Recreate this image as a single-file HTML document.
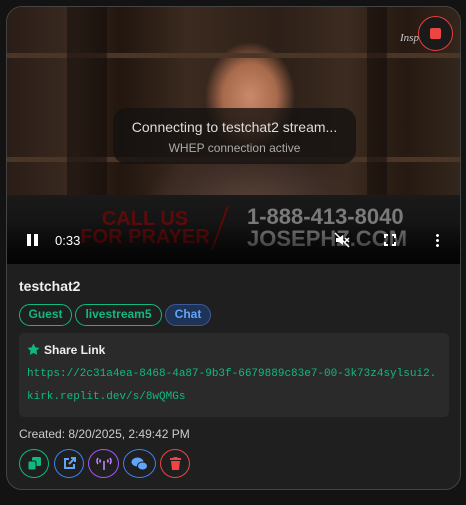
<!DOCTYPE html>
<html><head><style>
*{box-sizing:border-box;margin:0;padding:0}
body{width:466px;height:505px;background:#131313;font-family:"Liberation Sans",sans-serif;position:relative;overflow:hidden}
.card{position:absolute;left:6px;top:6px;width:455px;height:484px;background:#1f1f1f;border:1px solid #444;border-radius:16px;overflow:hidden}
.vid{position:absolute;left:0;top:0;width:453px;height:257px;overflow:hidden;
background:
radial-gradient(ellipse 45px 55px at 243px 90px,#c98a6a 0%,#a86a4c 60%,rgba(90,50,35,0) 100%),
radial-gradient(ellipse 110px 60px at 245px 200px,#5a4338 0%,#3e2e27 70%,rgba(40,30,25,0) 100%),
linear-gradient(90deg,#2a1d17 0%,#3a2a20 15%,#22160f 25%,#3b2a1f 40%,#2d2018 60%,#3c2b20 75%,#251911 88%,#33261c 100%)}
.shelf{position:absolute;left:0;width:453px;height:5px;background:#4a3526}
.banner{position:absolute;left:0;top:188px;width:453px;height:69px;background:linear-gradient(#1a1a1a,#0c0c0c)}
.ov{position:absolute;left:106px;top:101px;width:243px;height:56px;background:rgba(20,18,17,.78);border-radius:14px;text-align:center}
.ov .a{color:#ddd;font-size:14px;margin-top:11px}
.ov .b{color:#aaa;font-size:12px;margin-top:6px}
.ctl{position:absolute;color:#fff;font-size:13px}
.t{position:absolute;font-weight:bold}
.tag{position:absolute;top:297px;height:22px;border-radius:11px;font-size:12px;font-weight:bold;text-align:center;line-height:19px;border:1.5px solid #10b981;color:#10b981}
.share{position:absolute;left:12px;top:326px;width:430px;height:84px;background:#2a2a2a;border-radius:5px}
.mono{font-family:"Liberation Mono",monospace;font-size:11px;color:#10b981;position:absolute;left:8px}
.btn{position:absolute;top:442px;height:29px;border-radius:50%;border:1.5px solid;display:flex;align-items:center;justify-content:center}
</style></head><body>
<div class="card">
 <div class="vid">
  <div class="shelf" style="top:46px"></div><div class="shelf" style="top:150px"></div>
  <div style="position:absolute;left:60px;top:0;width:40px;height:190px;background:rgba(15,10,8,.5)"></div>
  <div style="position:absolute;left:360px;top:0;width:20px;height:190px;background:rgba(15,10,8,.5)"></div>
  <div class="banner"></div>
  <div style="position:absolute;left:58px;top:203px;color:#5e0a0a;font-weight:bold;font-size:20px;line-height:18px;text-align:center;width:160px">CALL US<br>FOR PRAYER</div>
  <div style="position:absolute;left:212px;top:199px;width:12px;height:44px;border-left:2px solid #5e0a0a;transform:skewX(-20deg)"></div>
  <div style="position:absolute;left:240px;top:199px;color:#7a7a7a;font-weight:bold;font-size:22px;line-height:22px">1-888-413-8040<br>JOSEPHZ.COM</div>
  <div style="position:absolute;left:0;top:215px;width:453px;height:42px;background:linear-gradient(rgba(0,0,0,0),rgba(0,0,0,.75))"></div>
  <div class="ov"><div class="a">Connecting to testchat2 stream...</div><div class="b">WHEP connection active</div></div>
  <div style="position:absolute;left:20px;top:227px;width:4px;height:12px;background:#fff"></div>
  <div style="position:absolute;left:27px;top:227px;width:4px;height:12px;background:#fff"></div>
  <div class="ctl" style="left:48px;top:226px">0:33</div>
  <svg style="position:absolute;left:327px;top:225px" width="16" height="16" viewBox="0 0 16 16"><path d="M2 6h3l4-3v10l-4-3H2z" fill="#fff"/><path d="M11 6l4 4M15 6l-4 4M1 1l14 14" stroke="#fff" stroke-width="1.5"/></svg>
  <svg style="position:absolute;left:377px;top:227px" width="12" height="12" viewBox="0 0 12 12" fill="none" stroke="#fff" stroke-width="2"><path d="M1 4V1h3M8 1h3v3M11 8v3H8M4 11H1V8"/></svg>
  <div style="position:absolute;left:429px;top:226px;width:3px;height:14px;background:radial-gradient(circle,#fff 1.3px,transparent 1.6px) 0 0/3px 5px"></div>
  <div style="position:absolute;left:393px;top:25px;color:#ccc;font-style:italic;font-size:11px;font-family:'Liberation Serif',serif">Insp</div>
  <div style="position:absolute;left:411px;top:9px;width:35px;height:35px;border-radius:50%;background:#1a1a1a;border:1.5px solid #e53e3e"></div>
  <div style="position:absolute;left:423px;top:21px;width:11px;height:11px;border-radius:2px;background:#ef4444"></div>
 </div>
 <div class="t" style="left:12px;top:271px;color:#eee;font-size:14px">testchat2</div>
 <div class="tag" style="left:12px;width:53px">Guest</div>
 <div class="tag" style="left:68px;width:87px">livestream5</div>
 <div class="tag" style="left:158px;width:46px;border-color:#3b5a95;color:#60a5fa;background:#1f3358">Chat</div>
 <div class="share">
  <svg style="position:absolute;left:8px;top:10px" width="13" height="13" viewBox="0 0 24 24"><path d="M12 1l3.4 7 7.6 1-5.5 5.3 1.3 7.7L12 18.3 5.2 22l1.3-7.7L1 9l7.6-1z" fill="#10b981"/></svg>
  <div style="position:absolute;left:25px;top:10px;color:#eee;font-size:12px;font-weight:bold">Share Link</div>
  <div class="mono" style="top:35px">https://2c31a4ea-8468-4a87-9b3f-6679889c83e7-00-3k73z4sylsui2.</div>
  <div class="mono" style="top:58px">kirk.replit.dev/s/8wQMGs</div>
 </div>
 <div style="position:absolute;left:12px;top:420px;color:#ccc;font-size:12px">Created: 8/20/2025, 2:49:42 PM</div>
 <div class="btn" style="left:12px;width:30px;border-color:#10b981"><svg width="13" height="13" viewBox="0 0 13 13"><rect x="4" y="0" width="9" height="9" rx="1.5" fill="#10b981"/><rect x="0" y="4" width="8" height="9" rx="1.5" fill="#10b981" stroke="#1f1f1f" stroke-width="1"/></svg></div>
 <div class="btn" style="left:47px;width:30px;border-color:#3b82f6"><svg width="13" height="13" viewBox="0 0 13 13" fill="none" stroke="#60a5fa" stroke-width="2"><path d="M6 2H2v9h9V7"/><path d="M6 7l6-6M8 1h4v4"/></svg></div>
 <div class="btn" style="left:81px;width:31px;border-color:#a855f7"><svg width="16" height="13" viewBox="0 0 16 13" fill="none" stroke="#c084fc" stroke-width="1.6"><path d="M8 4v9M2 1q-2 3 0 6M14 1q2 3 0 6M4.5 2.5q-1 1.5 0 3M11.5 2.5q1 1.5 0 3"/></svg></div>
 <div class="btn" style="left:116px;width:33px;border-color:#3b82f6"><svg width="17" height="14" viewBox="0 0 17 14"><ellipse cx="6.5" cy="5" rx="6" ry="4.5" fill="#60a5fa"/><ellipse cx="11.5" cy="9" rx="5" ry="4" fill="#60a5fa" stroke="#1f1f1f" stroke-width="1"/></svg></div>
 <div class="btn" style="left:153px;width:30px;border-color:#ef4444"><svg width="11" height="13" viewBox="0 0 11 13" fill="#ef4444"><rect x="0" y="1" width="11" height="2"/><rect x="3.5" y="0" width="4" height="2"/><path d="M1 4h9l-1 9H2z"/></svg></div>
</div>
</body></html>
